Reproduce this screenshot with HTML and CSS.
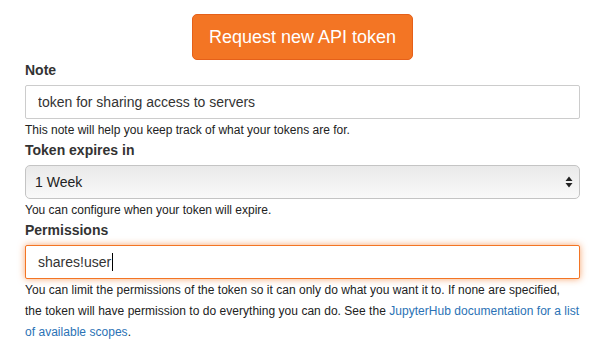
FILE: index.html
```html
<!DOCTYPE html>
<html lang="en">
<head>
    <meta charset="UTF-8">
    <meta name="viewport" content="width=device-width, initial-scale=1.0">
    <title>Token</title>
    <link rel="stylesheet" href="styles.css">
</head>
<body>
    <div class="container">
        <div class="request">
            <button class="btn-request">Request new API token</button>
        </div>
        <div class="form-group">
            <label for="tokenNote">Note</label>
            <input type="text" id="tokenNote" class="form-control" value="token for sharing access to servers">
            <small>This note will help you keep track of what your tokens are for.</small>
        </div>
        <div class="form-group">
            <label for="tokenExpires">Token expires in</label>
            <div class="select-wrap">
                <select id="tokenExpires" class="form-control select">
                    <option>1 Week</option>
                </select>
                <svg class="select-arrows" width="8" height="12" viewBox="0 0 8 12">
                    <path d="M4 0.5 L7.5 5 H0.5 Z M4 11.5 L7.5 7 H0.5 Z" fill="#222"/>
                </svg>
            </div>
            <small>You can configure when your token will expire.</small>
        </div>
        <div class="form-group">
            <label for="tokenScopes">Permissions</label>
            <div id="tokenScopes" class="form-control focused">shares!user<span class="caret"></span></div>
            <small class="scopes-help">You can limit the permissions of the token so it can only do what you want it to. If none are specified, the token will have permission to do everything you can do. See the <a href="#">JupyterHub documentation for a list of available scopes</a>.</small>
        </div>
    </div>
</body>
</html>
```

FILE: styles.css
```css
/* Token request form */
body {
    font-family: "Liberation Sans", Arial, sans-serif;
    font-size: 14px;
    line-height: 20px;
    color: #333;
    margin: 0;
    background: #fff;
}
.container {
    width: 555px;
    margin-left: 25px;
}
.request {
    text-align: center;
    padding-top: 14px;
}
.btn-request {
    font-family: inherit;
    font-size: 18px;
    line-height: 24px;
    padding: 10px 16px;
    color: #fff;
    background-color: #f37524;
    border: 1px solid #e5601a;
    border-radius: 5px;
    cursor: pointer;
}
.form-group label {
    display: block;
    font-weight: bold;
    margin-bottom: 5px;
}
.form-control {
    display: block;
    width: 100%;
    height: 34px;
    padding: 6px 12px;
    font-family: inherit;
    font-size: 14px;
    line-height: 20px;
    color: #333;
    background: #fff;
    border: 1px solid #ccc;
    border-radius: 2px;
    box-sizing: border-box;
}
.select-wrap {
    position: relative;
}
.select {
    -webkit-appearance: none;
    appearance: none;
    padding-left: 9px;
    color: #222;
    border-color: #c4c4c4;
    border-radius: 5px;
    background: linear-gradient(#e9e9e9, #f9f9f9);
}
.select-arrows {
    position: absolute;
    right: 7px;
    top: 11px;
}
.focused {
    border-color: #f37524;
    box-shadow: 0 0 7px rgba(243, 117, 36, 0.65);
}
.caret {
    display: inline-block;
    width: 1px;
    height: 18px;
    margin-left: 1px;
    vertical-align: -4px;
    background: #000;
}
small {
    font-size: 12px;
    color: #222;
}
.scopes-help {
    letter-spacing: 0.03px;
}
a {
    color: #2a72b5;
    text-decoration: none;
}
```
